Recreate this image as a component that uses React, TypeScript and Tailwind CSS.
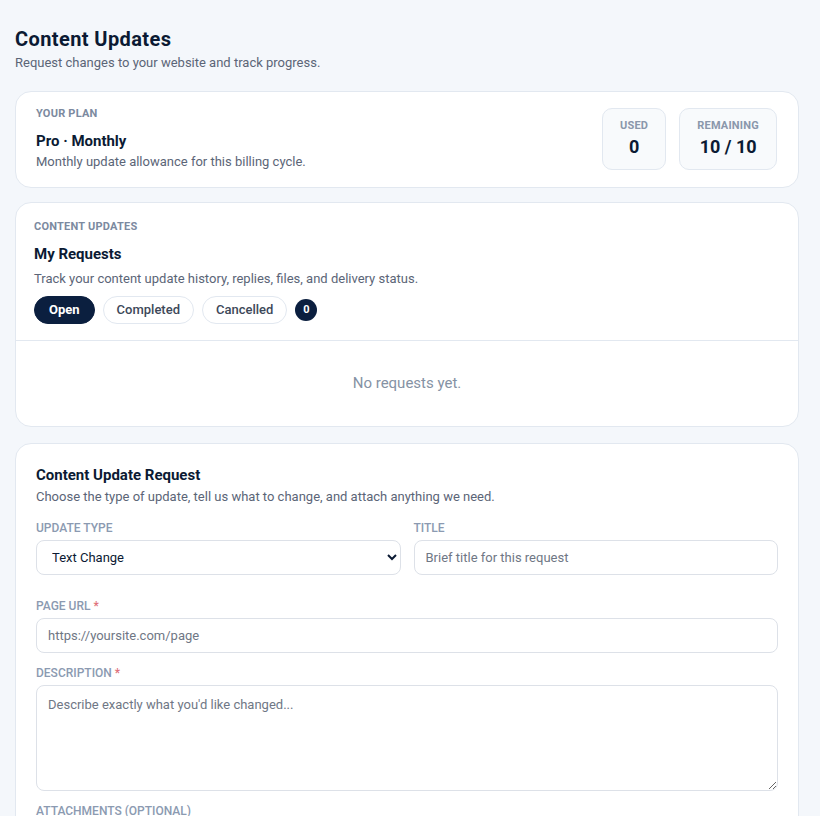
import { useState } from 'react';

const tabs = ['Open', 'Completed', 'Cancelled'];

function StatBox({ label, value }: { label: string; value: string }) {
  return (
    <div className="flex h-[62px] flex-col items-center justify-center rounded-[10px] border border-[#e2e8f0] bg-[#f8fafc] px-[17px]">
      <div className="text-[11px] leading-[14px] font-bold uppercase tracking-[0.02em] text-[#8a97ab]">{label}</div>
      <div className="mt-[2px] text-[18px] font-bold leading-6 text-[#0b1a33]">{value}</div>
    </div>
  );
}

function Label({ children, required }: { children: React.ReactNode; required?: boolean }) {
  return (
    <label className="mb-[4px] block text-[12px] leading-4 font-medium uppercase text-[#8b9ab1]">
      {children}
      {required && <span className="text-[#e0707a]"> *</span>}
    </label>
  );
}

const inputCls =
  'h-[35px] w-full rounded-[8px] border border-[#dde1e8] bg-white px-[11px] text-[13px] text-[#0b1a33] placeholder:text-[#6f7785] focus:outline-none';

export default function App() {
  const [tab, setTab] = useState('Open');
  const [type, setType] = useState('Text Change');

  return (
    <div className="min-h-screen bg-[#f4f7fb] pt-[26px] pr-[21px] pb-10 pl-[15px] font-['Roboto',sans-serif] text-[#0b1a33]">
      <h1 className="text-[20px] font-bold leading-[26px] tracking-[0.02em]">Content Updates</h1>
      <p className="mt-[2px] text-[13px] leading-[18px] text-[#5b6577]">Request changes to your website and track progress.</p>

      {/* plan card */}
      <section className="mt-[19px] flex items-center justify-between rounded-[16px] border border-[#e2e8f0] bg-white pt-[15px] pb-[16px] pr-[21px] pl-[20px]">
        <div>
          <div className="text-[11px] leading-[14px] font-bold uppercase tracking-[0.02em] text-[#7c8aa0]">Your plan</div>
          <div className="mt-[10px] text-[15px] font-bold leading-5">Pro · Monthly</div>
          <div className="mt-[2px] text-[13px] leading-[18px] text-[#5b6577]">Monthly update allowance for this billing cycle.</div>
        </div>
        <div className="flex gap-[13px]">
          <StatBox label="Used" value="0" />
          <StatBox label="Remaining" value="10 / 10" />
        </div>
      </section>

      {/* requests card */}
      <section className="mt-[14px] rounded-[16px] border border-[#e2e8f0] bg-white">
        <div className="px-[18px] pt-[17px] pb-[16px]">
          <div className="text-[11px] leading-[14px] font-bold uppercase tracking-[0.02em] text-[#7c8aa0]">Content updates</div>
          <div className="mt-[10px] text-[15px] font-bold leading-5">My Requests</div>
          <div className="mt-[6px] text-[13px] leading-[18px] text-[#5b6577]">Track your content update history, replies, files, and delivery status.</div>
          <div className="mt-[8px] flex items-center gap-2">
            {tabs.map(t => (
              <button
                key={t}
                type="button"
                onClick={() => setTab(t)}
                className={
                  t === tab
                    ? 'h-[28px] rounded-full border border-[#0b1f3f] bg-[#0b1f3f] px-[14px] text-[13px] font-bold text-white'
                    : 'h-[28px] rounded-full border border-[#e2e8f0] bg-white px-[13px] text-[13px] font-medium text-[#3d4859]'
                }
              >
                {t}
              </button>
            ))}
            <span className="flex h-[22px] w-[22px] items-center justify-center rounded-full bg-[#0b1f3f] text-[11px] font-bold text-white">0</span>
          </div>
        </div>
        <div className="flex h-[86px] items-center justify-center border-t border-[#e2e8f0] text-[15px] text-[#8592a4]">
          No requests yet.
        </div>
      </section>

      {/* request form */}
      <section className="mt-[16px] rounded-[16px] border border-[#e2e8f0] bg-white px-[20px] pt-[21px] pb-6">
        <div className="text-[15px] font-bold leading-5">Content Update Request</div>
        <div className="mt-[3px] text-[13px] leading-[18px] text-[#5b6577]">Choose the type of update, tell us what to change, and attach anything we need.</div>

        <div className="mt-[14px] grid grid-cols-2 gap-[13px]">
          <div>
            <Label>Update type</Label>
            <select value={type} onChange={e => setType(e.target.value)} className={inputCls + ' text-[#0b1a33]'}>
              <option>Text Change</option>
              <option>Image Change</option>
              <option>New Page</option>
              <option>Other</option>
            </select>
          </div>
          <div>
            <Label>Title</Label>
            <input className={inputCls} placeholder="Brief title for this request" />
          </div>
        </div>

        <div className="mt-[23px]">
          <Label required>Page URL</Label>
          <input className={inputCls} placeholder="https://yoursite.com/page" />
        </div>

        <div className="mt-[12px]">
          <Label required>Description</Label>
          <textarea
            rows={5}
            className="block h-[106px] w-full rounded-[8px] border border-[#dde1e8] bg-white px-[11px] py-[9px] text-[13px] placeholder:text-[#6f7785] focus:outline-none"
            placeholder="Describe exactly what you'd like changed..."
          />
        </div>

        <div className="mt-[12px]">
          <Label>Attachments (optional)</Label>
        </div>
      </section>
    </div>
  );
}
